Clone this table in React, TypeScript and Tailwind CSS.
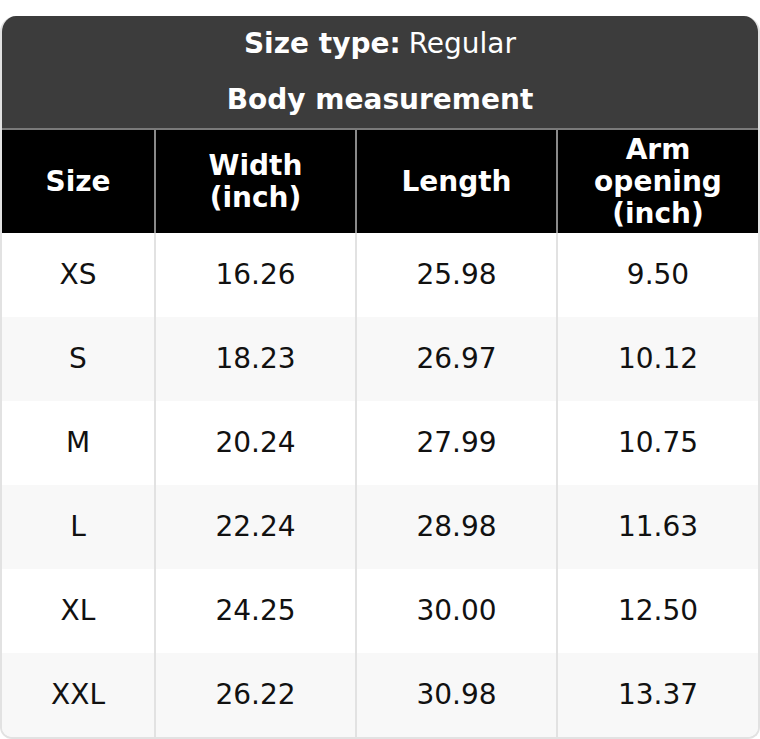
const rows = [
  ["XS", "16.26", "25.98", "9.50"],
  ["S", "18.23", "26.97", "10.12"],
  ["M", "20.24", "27.99", "10.75"],
  ["L", "22.24", "28.98", "11.63"],
  ["XL", "24.25", "30.00", "12.50"],
  ["XXL", "26.22", "30.98", "13.37"],
];

export default function App() {
  return (
    <div className="w-[760px] h-[739px] bg-white pt-4 font-['DejaVu_Sans',sans-serif] text-[28px] leading-[32px]">
      <div className="rounded-t-2xl rounded-b-xl overflow-hidden border-2 border-t-0 border-[#e2e2e2]">
        {/* Title block */}
        <div className="bg-[#3c3c3c] text-white text-center border-b-2 border-[#7a7a7a]">
          <div className="h-[56px] flex items-center justify-center">
            <span className="font-bold">Size type:</span>
            <span className="ml-2">Regular</span>
          </div>
          <div className="h-[56px] flex items-center justify-center font-bold">Body measurement</div>
        </div>

        <table className="w-full table-fixed border-collapse text-center">
          <colgroup>
            <col className="w-[153px]" />
            <col className="w-[201px]" />
            <col className="w-[201px]" />
            <col />
          </colgroup>
          <thead>
            <tr className="bg-black text-white font-bold h-[103px]">
              <th className="border-r-2 border-[#8a8a8a] font-bold">Size</th>
              <th className="border-r-2 border-[#8a8a8a] font-bold">
                Width
                <br />
                (inch)
              </th>
              <th className="border-r-2 border-[#8a8a8a] font-bold">Length</th>
              <th className="font-bold">
                Arm
                <br />
                opening
                <br />
                (inch)
              </th>
            </tr>
          </thead>
          <tbody className="text-[#111]">
            {rows.map((r, i) => (
              <tr key={r[0]} className={i % 2 === 0 ? "bg-white h-[84px]" : "bg-[#f8f8f8] h-[84px]"}>
                {r.map((c, j) => (
                  <td key={j} className={j < 3 ? "border-r-2 border-[#e2e2e2]" : ""}>
                    {c}
                  </td>
                ))}
              </tr>
            ))}
          </tbody>
        </table>
      </div>
    </div>
  );
}
